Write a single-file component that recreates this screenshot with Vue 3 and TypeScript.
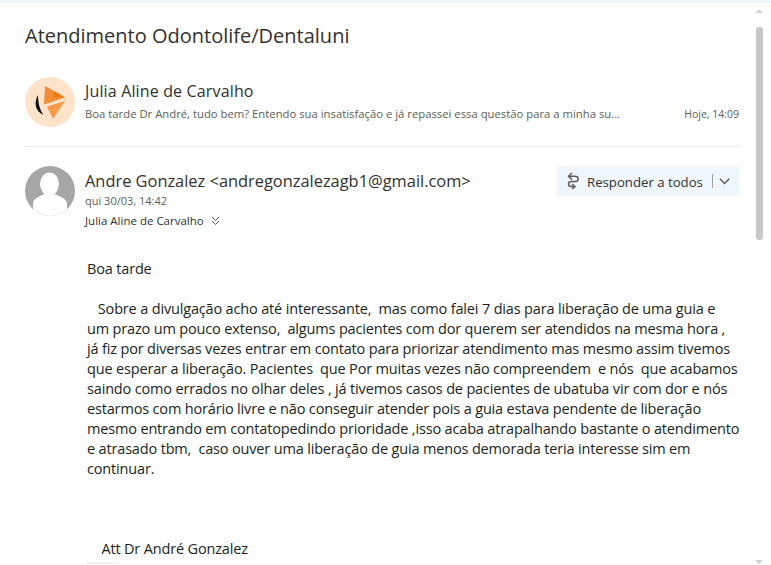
<script setup lang="ts">
const lines: string[] = [
  'Boa tarde',
  '',
  '\u00a0 \u00a0Sobre a divulgação acho até interessante,  mas como falei 7 dias para liberação de uma guia e',
  'um prazo um pouco extenso,  algums pacientes com dor querem ser atendidos na mesma hora ,',
  'já fiz por diversas vezes entrar em contato para priorizar atendimento mas mesmo assim tivemos',
  'que esperar a liberação. Pacientes  que Por muitas vezes não compreendem  e nós  que acabamos',
  'saindo como errados no olhar deles , já tivemos casos de pacientes de ubatuba vir com dor e nós',
  'estarmos com horário livre e não conseguir atender pois a guia estava pendente de liberação',
  'mesmo entrando em contatopedindo prioridade ,isso acaba atrapalhando bastante o atendimento',
  'e atrasado tbm,  caso ouver uma liberação de guia menos demorada teria interesse sim em',
  'continuar.',
  '',
  '',
  '',
  '\u00a0 \u00a0 Att Dr André Gonzalez',
]
</script>

<template>
  <div class="page">
    <div class="topstrip"></div>
    <div class="frame">
      <main class="content">
        <h1 class="title">Atendimento Odontolife/Dentaluni</h1>

        <section class="collapsed">
          <div class="avatar logo">
            <svg width="50" height="50" viewBox="0 0 50 50">
              <circle cx="25" cy="25" r="25" fill="#fde3c9" />
              <path d="M20 9 L40 20.5 L19 27.5 Z" fill="#f28c36" />
              <path d="M29 14 L40 20.5 L28 20 Z" fill="#e87a0e" />
              <path d="M22 29.5 L40 24 L28 42 Z" fill="#f59a4b" />
              <path d="M13 18 C9 25 9.5 34 18.5 38 C15 33 13 26 13 18 Z" fill="#111" />
            </svg>
          </div>
          <div class="collapsed-text">
            <div class="sender">Julia Aline de Carvalho</div>
            <div class="preview-row">
              <span class="preview">Boa tarde Dr André, tudo bem? Entendo sua insatisfação e já repassei essa questão para a minha su...</span>
              <span class="time">Hoje, 14:09</span>
            </div>
          </div>
        </section>

        <section class="message">
          <header class="msg-head">
            <div class="avatar person">
              <svg width="50" height="50" viewBox="0 0 50 50">
                <defs>
                  <clipPath id="avatar-clip"><circle cx="25" cy="25" r="25" /></clipPath>
                </defs>
                <circle cx="25" cy="25" r="25" fill="#a6a6a6" />
                <g clip-path="url(#avatar-clip)" fill="#fff">
                  <ellipse cx="24.5" cy="18" rx="9.5" ry="11.5" />
                  <path d="M8 50 V38 C8 32 15 30.5 19 28 H30 C34 30.5 42 32 42 38 V50 Z" />
                </g>
              </svg>
            </div>
            <div class="from">
              <div class="from-name">Andre Gonzalez &lt;andregonzalezagb1@gmail.com&gt;</div>
              <div class="date">qui 30/03, 14:42</div>
              <div class="to">
                <span>Julia Aline de Carvalho</span>
                <svg class="chev-double" width="9" height="10" viewBox="0 0 9 10" fill="none" stroke="#605e5c" stroke-width="1">
                  <path d="M1 1 L4.5 4.5 L8 1" />
                  <path d="M1 5 L4.5 8.5 L8 5" />
                </svg>
              </div>
            </div>
            <button class="reply" type="button">
              <svg class="reply-icon" width="14" height="18" viewBox="0 0 14 18" fill="none" stroke="#605e5c" stroke-width="1.5">
                <path d="M6 1 L2.5 4.3 L6 7.6" />
                <path d="M3 4.3 H9 C13.2 4.3 13.2 9.5 9 9.5 H5.5 C1.5 9.5 1.5 14.5 5.5 14.5 H8" />
                <path d="M6 12 L9 14.7 L6 17" />
              </svg>
              <span class="reply-label">Responder a todos</span>
              <span class="divider"></span>
              <svg width="11" height="7" viewBox="0 0 11 7" fill="none" stroke="#605e5c" stroke-width="1.4">
                <path d="M0.8 0.8 L5.5 5.5 L10.2 0.8" />
              </svg>
            </button>
          </header>

          <div class="body">
            <div v-for="(line, i) in lines" :key="i" class="line">{{ line || '\u00a0' }}</div>
            <div class="trim"></div>
          </div>
        </section>
      </main>

      <aside class="scrollbar">
        <span class="arrow up"></span>
        <div class="track"><div class="thumb"></div></div>
        <span class="arrow down"></span>
      </aside>
    </div>
  </div>
</template>

<style>
html, body { margin: 0; background: #fff; }
</style>

<style scoped>
.page {
  width: 771px;
  height: 565px;
  overflow: hidden;
  display: flex;
  flex-direction: column;
  font-family: "Open Sans", "Noto Sans", sans-serif;
  color: #323130;
  background: #fff;
}
.topstrip { height: 3px; background: #eff6fc; flex: none; }
.frame { flex: 1; display: flex; min-height: 0; }
.content { flex: none; padding-left: 25px; width: 714px; }
.title {
  margin: 0;
  padding-top: 19px;
  font-size: 20px;
  line-height: 27px;
  font-weight: 400;
  color: #323130;
}
.collapsed {
  display: flex;
  gap: 10px;
  margin-top: 28px;
  padding-bottom: 19px;
  border-bottom: 1px solid #e9e8e7;
}
.avatar { width: 50px; height: 50px; flex: none; }
.avatar svg { display: block; }
.collapsed-text { flex: 1; min-width: 0; padding-top: 3px; }
.sender { font-size: 16px; line-height: 22px; letter-spacing: 0.15px; color: #323130; }
.preview-row { display: flex; justify-content: space-between; align-items: center; margin-top: 3px; }
.preview { font-size: 11.3px; line-height: 18px; color: #605e5c; white-space: nowrap; }
.time { font-size: 10.5px; line-height: 18px; color: #605e5c; white-space: nowrap; }
.message { padding-top: 19px; }
.msg-head { display: flex; gap: 10px; align-items: flex-start; }
.from { flex: 1; min-width: 0; padding-top: 4px; }
.from-name { font-size: 16.4px; line-height: 22px; white-space: nowrap; color: #323130; }
.date { font-size: 11px; line-height: 15px; color: #605e5c; margin-top: 1px; }
.to { display: flex; align-items: center; gap: 7px; font-size: 11.5px; line-height: 18px; margin-top: 4px; color: #323130; }
.reply {
  flex: none;
  display: flex;
  align-items: center;
  height: 30px;
  width: 182px;
  box-sizing: border-box;
  padding: 0 0 0 9px;
  border: 0;
  background: #eff6fc;
  font: inherit;
  color: #323130;
}
.reply-label { font-size: 13.2px; margin-left: 7px; white-space: nowrap; position: relative; top: 1px; }
.divider { width: 1px; height: 14px; background: #a19f9d; margin: 0 6px 0 9px; }
.body { padding: 29px 0 0 62px; }
.line { font-size: 14.5px; line-height: 20px; letter-spacing: -0.165px; white-space: pre; color: #201f1e; }
.trim { width: 32px; height: 2px; margin-top: 3px; background: #f3f2f1; }
.scrollbar {
  width: 32px;
  flex: none;
  display: flex;
  flex-direction: column;
  align-items: center;
  padding: 6px 0 1px 8px;
  box-sizing: border-box;
}
.arrow { width: 0; height: 0; border-left: 4px solid transparent; border-right: 4px solid transparent; flex: none; }
.arrow.up { border-bottom: 4px solid #cdd3d8; }
.arrow.down { border-top: 4px solid #cdd3d8; }
.track { flex: 1; width: 100%; padding-top: 14px; }
.thumb { width: 7px; height: 213px; margin: 0 auto; background: #c8c8c8; border-radius: 3px; }
</style>
